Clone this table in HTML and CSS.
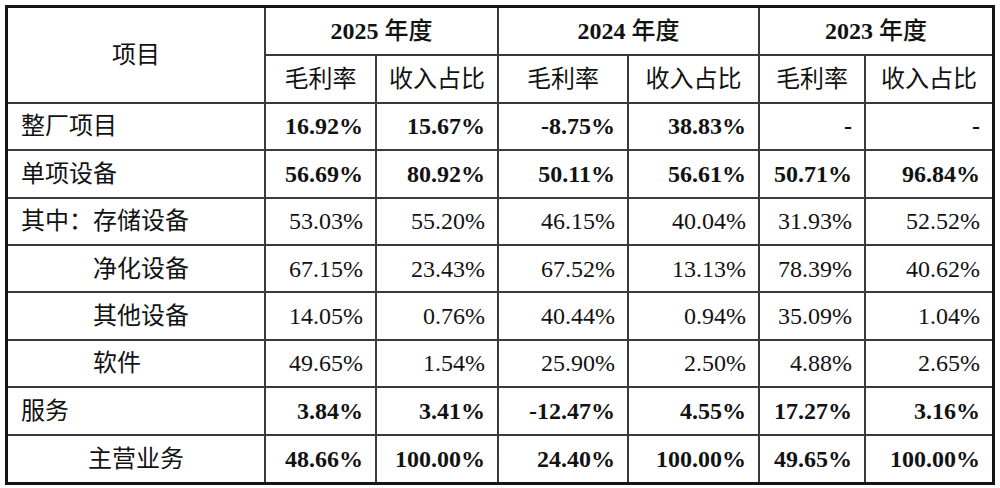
FILE: index.html
```html
<!DOCTYPE html>
<html lang="zh-CN">
<head>
<meta charset="utf-8">
<title>毛利率与收入占比</title>
<link rel="stylesheet" href="styles.css">
</head>
<body>
<div class="frame">
<table class="grid">
<colgroup>
<col class="c0"><col class="c1"><col class="c2"><col class="c3"><col class="c4"><col class="c5"><col class="c6">
</colgroup>
<thead>
<tr>
<th rowspan="2" class="item-head">项目</th>
<th colspan="2" class="year">2025 <span class="cjk-b">年度</span></th>
<th colspan="2" class="year">2024 <span class="cjk-b">年度</span></th>
<th colspan="2" class="year">2023 <span class="cjk-b">年度</span></th>
</tr>
<tr>
<th class="sub">毛利率</th><th class="sub">收入占比</th>
<th class="sub">毛利率</th><th class="sub">收入占比</th>
<th class="sub">毛利率</th><th class="sub">收入占比</th>
</tr>
</thead>
<tbody>
<tr class="bold">
<td class="label">整厂项目</td>
<td>16.92%</td><td>15.67%</td><td>-8.75%</td><td>38.83%</td><td>-</td><td>-</td>
</tr>
<tr class="bold">
<td class="label">单项设备</td>
<td>56.69%</td><td>80.92%</td><td>50.11%</td><td>56.61%</td><td>50.71%</td><td>96.84%</td>
</tr>
<tr>
<td class="label">其中：存储设备</td>
<td>53.03%</td><td>55.20%</td><td>46.15%</td><td>40.04%</td><td>31.93%</td><td>52.52%</td>
</tr>
<tr>
<td class="label indent">净化设备</td>
<td>67.15%</td><td>23.43%</td><td>67.52%</td><td>13.13%</td><td>78.39%</td><td>40.62%</td>
</tr>
<tr>
<td class="label indent">其他设备</td>
<td>14.05%</td><td>0.76%</td><td>40.44%</td><td>0.94%</td><td>35.09%</td><td>1.04%</td>
</tr>
<tr>
<td class="label indent">软件</td>
<td>49.65%</td><td>1.54%</td><td>25.90%</td><td>2.50%</td><td>4.88%</td><td>2.65%</td>
</tr>
<tr class="bold">
<td class="label">服务</td>
<td>3.84%</td><td>3.41%</td><td>-12.47%</td><td>4.55%</td><td>17.27%</td><td>3.16%</td>
</tr>
<tr class="bold">
<td class="label total">主营业务</td>
<td>48.66%</td><td>100.00%</td><td>24.40%</td><td>100.00%</td><td>49.65%</td><td>100.00%</td>
</tr>
</tbody>
</table>
</div>
</body>
</html>
```

FILE: styles.css
```css
html, body {
  margin: 0;
  padding: 0;
  background: #ffffff;
}

body {
  font-family: "Liberation Serif", "Noto Sans CJK SC", serif;
  font-size: 24px;
  color: #121212;
}

.frame {
  margin: 5px;
  width: 984px;
  border: 3px solid #151515;
}

.grid {
  width: 984px;
  border-collapse: collapse;
  border-style: hidden;
  table-layout: fixed;
}

.c0 { width: 257px; }
.c1 { width: 111px; }
.c2 { width: 122px; }
.c3 { width: 130px; }
.c4 { width: 131px; }
.c5 { width: 106px; }
.c6 { width: 127px; }

.grid tr {
  height: 47.4px;
}

.grid th,
.grid td {
  border: 2px solid #3a3a3a;
  padding: 0 12px 0 0;
  text-align: right;
  vertical-align: middle;
  line-height: 1;
  white-space: nowrap;
}

.grid th {
  font-weight: 400;
  text-align: center;
  padding: 0;
}

.grid th.year {
  font-weight: 700;
}

.cjk-b {
  font-weight: 500;
}

.grid td.label {
  text-align: left;
  padding-left: 13px;
  font-weight: 400;
}

.grid td.indent {
  padding-left: 85px;
}

.grid td.total {
  padding-left: 80px;
}

.bold td {
  font-weight: 700;
}
```
